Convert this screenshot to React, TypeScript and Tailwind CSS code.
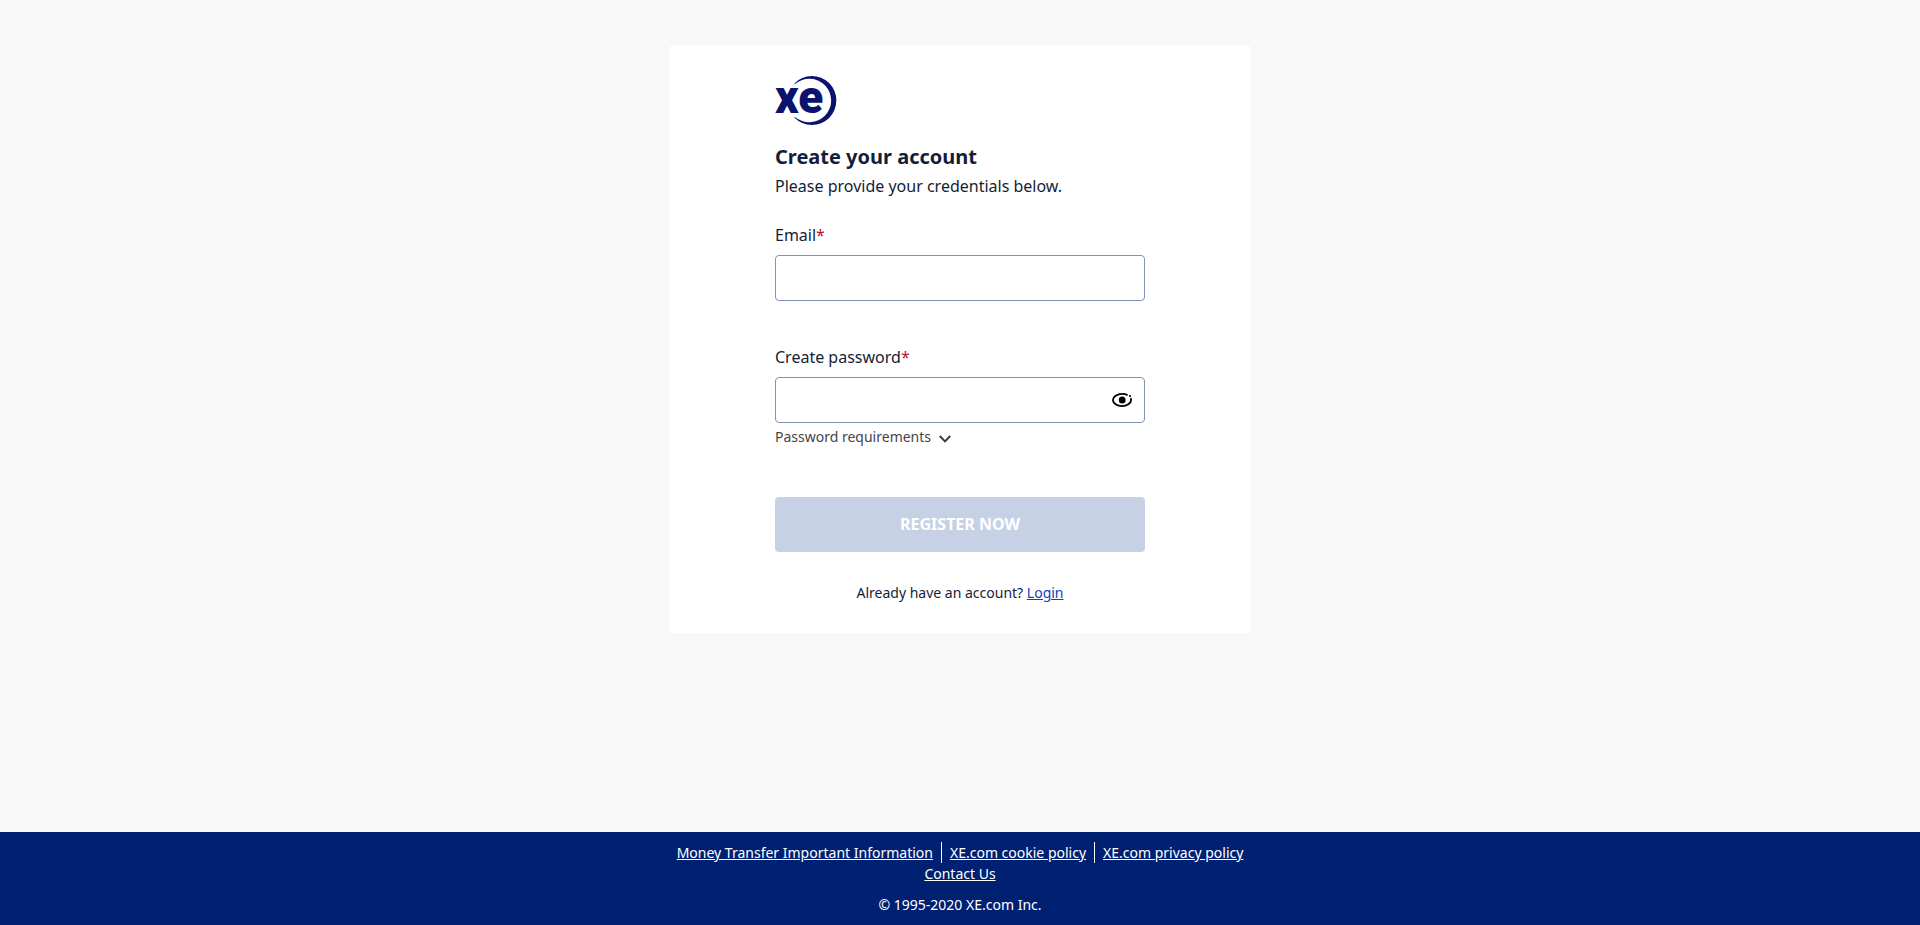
import { useState } from "react";

const footerLinks = [
  "Money Transfer Important Information",
  "XE.com cookie policy",
  "XE.com privacy policy",
];

function Logo() {
  return (
    <svg width="62" height="49" viewBox="0 0 62 49" fill="#0a146e" role="img" aria-label="xe" className="block overflow-visible">
      <path d="M19.3 7.4A24.5 24.5 0 1 1 19.3 41.6L20 40.9A21.8 21.8 0 1 0 20 8.1Z" />
      <text x="0" y="37" fontFamily="Roboto, sans-serif" fontWeight="900" fontSize="46">
        xe
      </text>
    </svg>
  );
}

function EyeIcon() {
  return (
    <svg width="20" height="14" viewBox="0 0 20 14" fill="none" stroke="#000" strokeWidth="1.8" className="block">
      <path d="M15.6 2.2C14 1.2 12 .9 10 .9C5 .9 .9 4 .9 7S5 13.1 10 13.1S19.1 10 19.1 7C19.1 6.3 18.9 5.700 18.600 5.100" />
      <ellipse cx="10.200" cy="7" rx="3.400" ry="3.600" fill="#000" stroke="none" />
      <circle cx="18" cy="3" r="1.1" fill="#000" stroke="none" />
    </svg>
  );
}

function Field({ id, label, type, children }: { id: string; label: string; type: string; children?: React.ReactNode }) {
  return (
    <div>
      <label htmlFor={id} className="mb-2 block text-base leading-6">
        {label}
        <span className="text-[#b90e31]">*</span>
      </label>
      <div className="flex h-[46px] items-center rounded border border-[#8291b5] bg-white">
        <input id={id} type={type} className="h-full min-w-0 flex-1 rounded px-3 text-base outline-none" />
        {children}
      </div>
    </div>
  );
}

export default function App() {
  const [visible, setVisible] = useState(false);

  return (
    <div className="flex min-h-screen flex-col bg-[#f8f8f8] font-['Noto_Sans',sans-serif] text-[#141e37]">
      <main className="flex-1 pt-[46px] pb-10">
        <section className="mx-auto w-full max-w-[580px] bg-white py-[30px]">
          <form className="mx-auto w-full max-w-[370px]" onSubmit={(e) => e.preventDefault()}>
            <Logo />
            <h1 className="mt-[18px] text-xl leading-7 font-bold">Create your account</h1>
            <p className="mt-[3px] mb-[25px] text-base leading-6">Please provide your credentials below.</p>
            <Field id="email" label="Email" type="email" />
            <div className="mt-11">
              <Field id="password" label="Create password" type={visible ? "text" : "password"}>
                <button
                  type="button"
                  aria-label="Show password"
                  className="px-3"
                  onClick={() => setVisible(!visible)}
                >
                  <EyeIcon />
                </button>
              </Field>
            </div>
            <button type="button" className="mt-[3px] flex items-center gap-2 text-sm leading-[21px] text-[#454545]">
              Password requirements
              <svg width="12" height="8" viewBox="0 0 12 8" fill="none" stroke="#3c3c3c" strokeWidth="2" className="mt-1 block">
                <path d="M.8 1L6 6.400L11.200 1" />
              </svg>
            </button>
            <button
              type="submit"
              disabled
              className="mt-[50px] h-[55px] w-full rounded bg-[#c7d1e6] pb-[2px] text-base font-bold text-white"
            >
              REGISTER NOW
            </button>
            <p className="mt-[30px] text-center text-sm leading-[21px]">
              Already have an account?{" "}
              <a href="#login" className="text-[#0c41c0] underline">
                Login
              </a>
            </p>
          </form>
        </section>
      </main>
      <footer className="bg-[#002171] py-[10px] text-center text-sm leading-[21px] text-white">
        <ul className="flex flex-wrap justify-center">
          {footerLinks.map((text) => (
            <li key={text} className="border-r border-white px-2 last:border-r-0">
              <a href="#legal" className="underline">
                {text}
              </a>
            </li>
          ))}
        </ul>
        <a href="#contact" className="underline">
          Contact Us
        </a>
        <p className="mt-[10px]">© 1995-2020 XE.com Inc.</p>
      </footer>
    </div>
  );
}
